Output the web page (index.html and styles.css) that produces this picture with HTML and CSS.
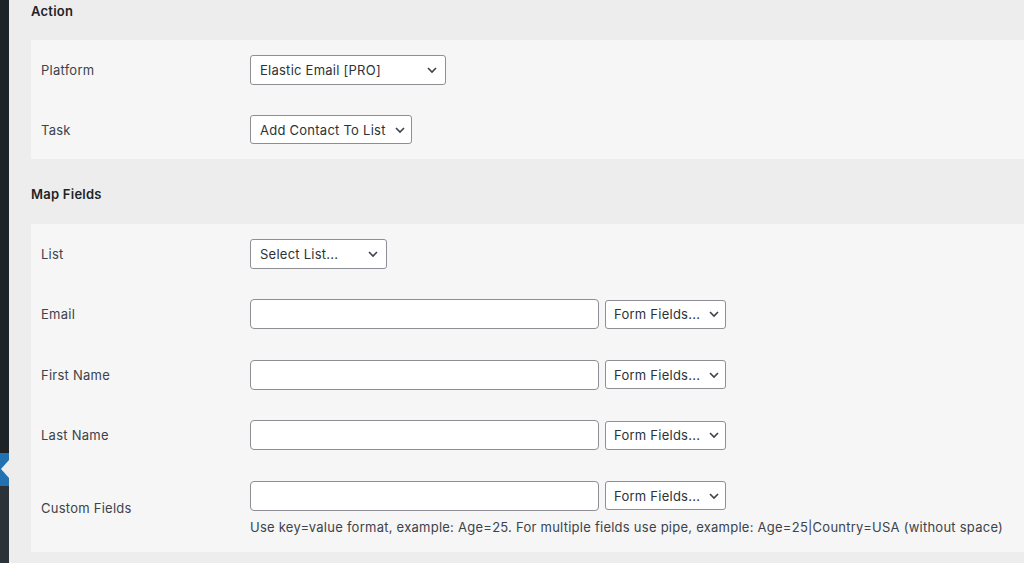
FILE: index.html
```html
<!DOCTYPE html>
<html>
<head>
<meta charset="utf-8">
<link rel="stylesheet" href="styles.css">
</head>
<body>
<div class="layout">
  <aside class="sidebar">
    <div class="side-top"></div>
    <div class="side-current"><span class="notch"></span></div>
    <div class="side-bottom"></div>
  </aside>
  <main class="content">
    <h2 class="section-title">Action</h2>
    <div class="panel panel-action">
      <div class="row">
        <div class="label">Platform</div>
        <div class="field"><div class="select w-platform"><span>Elastic Email [PRO]</span><svg class="chev" viewBox="0 0 12 8"><path d="M2 2l4 4 4-4" /></svg></div></div>
      </div>
      <div class="row">
        <div class="label">Task</div>
        <div class="field"><div class="select w-task"><span>Add Contact To List</span><svg class="chev" viewBox="0 0 12 8"><path d="M2 2l4 4 4-4" /></svg></div></div>
      </div>
    </div>
    <h2 class="section-title">Map Fields</h2>
    <div class="panel panel-map">
      <div class="row">
        <div class="label">List</div>
        <div class="field"><div class="select w-list"><span>Select List...</span><svg class="chev" viewBox="0 0 12 8"><path d="M2 2l4 4 4-4" /></svg></div></div>
      </div>
      <div class="row">
        <div class="label">Email</div>
        <div class="field"><div class="input"></div><div class="select w-ff"><span>Form Fields...</span><svg class="chev" viewBox="0 0 12 8"><path d="M2 2l4 4 4-4" /></svg></div></div>
      </div>
      <div class="row">
        <div class="label">First Name</div>
        <div class="field"><div class="input"></div><div class="select w-ff"><span>Form Fields...</span><svg class="chev" viewBox="0 0 12 8"><path d="M2 2l4 4 4-4" /></svg></div></div>
      </div>
      <div class="row">
        <div class="label">Last Name</div>
        <div class="field"><div class="input"></div><div class="select w-ff"><span>Form Fields...</span><svg class="chev" viewBox="0 0 12 8"><path d="M2 2l4 4 4-4" /></svg></div></div>
      </div>
      <div class="row row-custom">
        <div class="label">Custom Fields</div>
        <div class="field-col">
          <div class="field"><div class="input"></div><div class="select w-ff"><span>Form Fields...</span><svg class="chev" viewBox="0 0 12 8"><path d="M2 2l4 4 4-4" /></svg></div></div>
          <p class="desc">Use key=value format, example: Age=25. For multiple fields use pipe, example: Age=25|Country=USA (without space)</p>
        </div>
      </div>
    </div>
  </main>
</div>
</body>
</html>
```
FILE: styles.css
```css
* { box-sizing: border-box; }
html, body { margin: 0; padding: 0; }
body {
  background: #ededed;
  font-family: Inter, "Liberation Sans", Arial, sans-serif;
  font-size: 13px;
  letter-spacing: 0.25px;
  color: #3c434a;
  width: 1024px;
  height: 563px;
  overflow: hidden;
}
.layout { display: flex; height: 563px; }
.sidebar {
  width: 9px;
  flex: 0 0 9px;
  display: flex;
  flex-direction: column;
}
.side-top { height: 453px; background: #1d2327; }
.side-current {
  height: 33px;
  background: #2271b1;
  position: relative;
}
.notch {
  position: absolute;
  left: 1px;
  top: 7px;
  width: 0; height: 0;
  border-top: 9px solid transparent;
  border-bottom: 9px solid transparent;
  border-right: 8px solid #ededed;
}
.side-bottom { flex: 1; background: #2c3338; }
.content {
  flex: 1;
  padding-left: 22px;
}
.section-title {
  margin: 0;
  font-size: 13px;
  font-weight: 600;
  color: #1d2327;
  height: 40px;
  padding-top: 4px;
  line-height: 15px;
}
.panel {
  background: #f6f6f6;
  padding: 0 0 0 10px;
}
.panel-action { padding-top: 15px; padding-bottom: 15px; margin-bottom: 25px; }
.panel-action + .section-title { height: 40px; padding-top: 3px; }
.panel-map { padding-top: 15px; padding-bottom: 17px; }
.row {
  display: flex;
  align-items: center;
  height: 30px;
  margin-bottom: 30.4px;
}
.panel-action .row { margin-bottom: 30px; }
.panel-action .row:last-child { margin-bottom: 0; height: 29px; }
.row-custom { height: auto; margin-bottom: 0; align-items: center; }
.label {
  width: 209px;
  flex: 0 0 209px;
  color: #3c434a;
}
.field { display: flex; align-items: center; gap: 6px; }
.field-col { display: flex; flex-direction: column; }
.select {
  height: 30px;
  border: 1px solid #8c8f94;
  border-radius: 3px;
  background: #fff;
  display: flex;
  align-items: center;
  justify-content: space-between;
  padding: 0 7px 0 9px;
  color: #2c3338;
  white-space: nowrap;
}
.w-platform { width: 196px; }
.w-task { width: 162px; height: 29px; padding-right: 5px; }
.w-list { width: 137px; }
.w-ff { width: 121px; height: 29px; padding-left: 8px; padding-right: 5px; }
.chev {
  width: 12px;
  height: 8px;
  fill: none;
  stroke: #3c434a;
  stroke-width: 1.6;
  flex: 0 0 12px;
}
.input {
  width: 349px;
  height: 30px;
  border: 1px solid #8c8f94;
  border-radius: 4px;
  background: #fff;
}
.desc {
  margin: 8px 0 0 0;
  font-size: 13px;
  color: #3c434a;
  white-space: nowrap;
}
```
